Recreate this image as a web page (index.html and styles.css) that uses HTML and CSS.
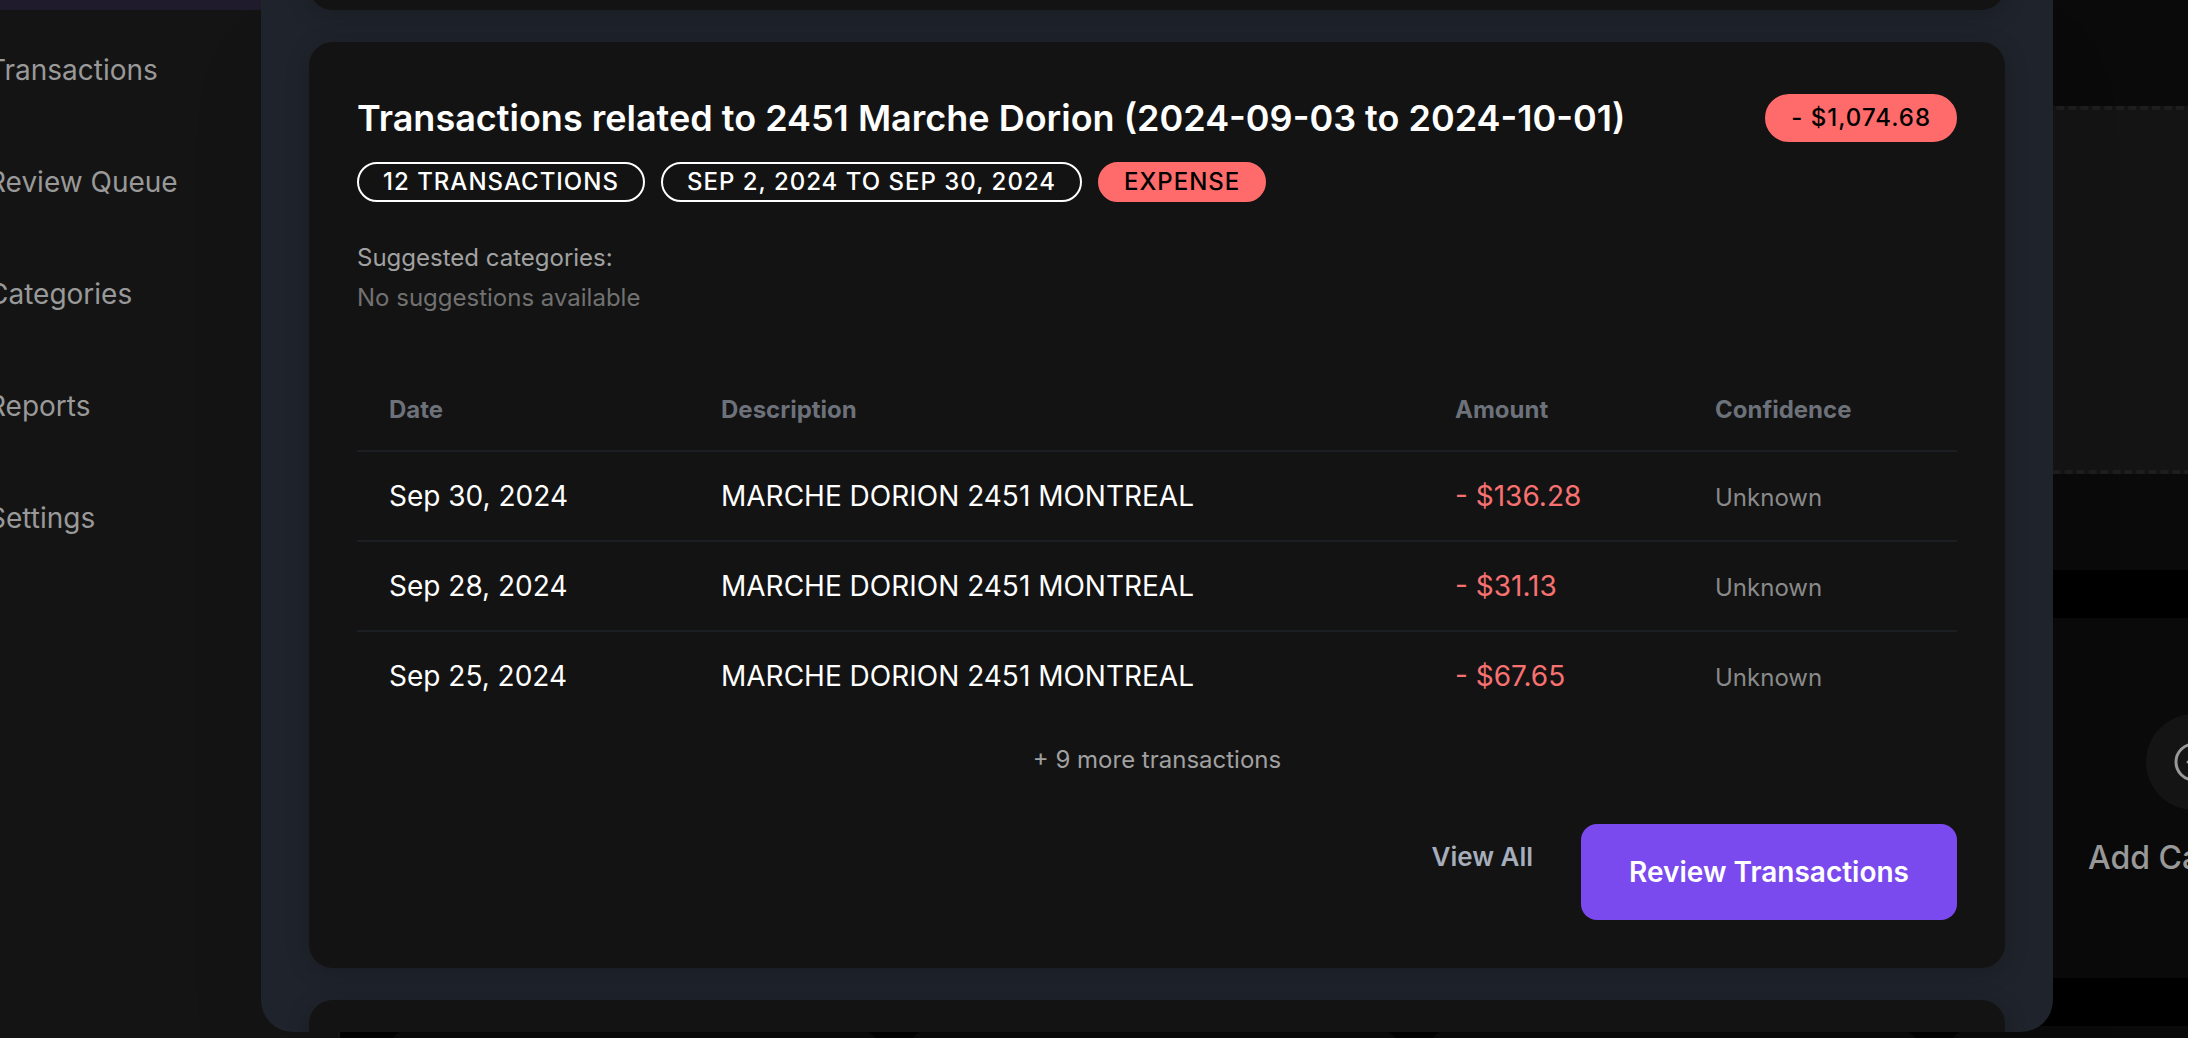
FILE: index.html
```html
<!DOCTYPE html>
<html lang="en">
<head>
<meta charset="utf-8">
<meta name="viewport" content="width=device-width, initial-scale=1">
<title>Review Queue</title>
<link rel="stylesheet" href="styles.css">
</head>
<body>
<div class="shell">
  <nav class="sidebar">
    <a class="nav-item active" href="#" aria-label="Dashboard"></a>
    <a class="nav-item" href="#">Transactions</a>
    <a class="nav-item" href="#">Review Queue</a>
    <a class="nav-item" href="#">Categories</a>
    <a class="nav-item" href="#">Reports</a>
    <a class="nav-item" href="#">Settings</a>
  </nav>
  <main class="main">
    <section class="upload">
      <div class="dropzone"></div>
    </section>
    <section class="actions">
      <a class="action" href="#">
        <span class="action-icon">
          <svg viewBox="0 0 24 24" width="48" height="48" fill="none" stroke="currentColor" stroke-width="1.5" stroke-linecap="round" stroke-linejoin="round" aria-hidden="true"><path d="M12 9v6m3-3H9m12 0a9 9 0 1 1-18 0 9 9 0 0 1 18 0Z"/></svg>
        </span>
        <span>Add Category</span>
      </a>
    </section>
    <section class="stats">
      <div class="stat"></div>
      <div class="stat"></div>
      <div class="stat"></div>
      <div class="stat"></div>
    </section>
  </main>
</div>

<div class="overlay">
  <div class="modal" role="dialog" aria-label="Transactions to review">
    <article class="card card-before"></article>
    <article class="card">
      <header class="card-head">
        <h2 class="title">Transactions related to 2451 Marche Dorion (2024-09-03 to 2024-10-01)</h2>
        <span class="badge badge-large badge-red">- $1,074.68</span>
      </header>
      <div class="badges">
        <span class="badge">12 TRANSACTIONS</span>
        <span class="badge">SEP 2, 2024 TO SEP 30, 2024</span>
        <span class="badge badge-red">EXPENSE</span>
      </div>
      <div class="suggest">
        <p class="suggest-label">Suggested categories:</p>
        <p class="suggest-none">No suggestions available</p>
      </div>
      <table class="table">
        <colgroup><col class="col-date"><col class="col-desc"><col class="col-amount"><col></colgroup>
        <thead>
          <tr><th scope="col">Date</th><th scope="col">Description</th><th scope="col">Amount</th><th scope="col">Confidence</th></tr>
        </thead>
        <tbody>
          <tr><td>Sep 30, 2024</td><td>MARCHE DORION 2451 MONTREAL</td><td class="amount">- $136.28</td><td><span class="unknown">Unknown</span></td></tr>
          <tr><td>Sep 28, 2024</td><td>MARCHE DORION 2451 MONTREAL</td><td class="amount">- $31.13</td><td><span class="unknown">Unknown</span></td></tr>
          <tr><td>Sep 25, 2024</td><td>MARCHE DORION 2451 MONTREAL</td><td class="amount">- $67.65</td><td><span class="unknown">Unknown</span></td></tr>
        </tbody>
      </table>
      <p class="more">+ 9 more transactions</p>
      <footer class="card-foot">
        <button class="btn-ghost" type="button">View All</button>
        <button class="btn-primary" type="button">Review Transactions</button>
      </footer>
    </article>
    <article class="card card-after"></article>
  </div>
</div>
</body>
</html>
```
FILE: styles.css
```css
* { box-sizing: border-box; margin: 0; padding: 0; }

html, body { height: 100%; }

body {
  position: relative;
  overflow: hidden;
  background: #000;
  color: #fff;
  font-family: Inter, "Liberation Sans", sans-serif;
  font-size: 28px;
  line-height: 40px;
}

a { color: inherit; text-decoration: none; }

/* Page behind the dialog */
.shell {
  display: flex;
  height: 100%;
  margin: 0 -300px 0 -100px;
}

.sidebar {
  display: flex;
  flex-direction: column;
  gap: 8px;
  flex: 0 0 440px;
  background: #141414;
  border-right: 2px solid #181818;
}

.nav-item {
  display: flex;
  align-items: center;
  flex: none;
  height: 104px;
  padding-left: 88px;
  color: #999;
}

.nav-item.active {
  height: 10px;
  background: #1f1a2c;
}

.main {
  display: flex;
  flex-direction: column;
  gap: 48px;
  flex: 1;
  padding: 0 46px;
}

.upload {
  flex: none;
  padding: 106px 48px 96px;
  background: #0a0a0a;
}

.dropzone {
  height: 368px;
  background: #141414;
  border: 4px dashed #1e1e1e;
  border-radius: 16px;
}

.actions, .stats {
  display: grid;
  grid-template-columns: repeat(4, 1fr);
  gap: 24px;
}

.actions { background: #0a0a0a; }

.action {
  grid-column: 4;
  display: flex;
  flex-direction: column;
  align-items: center;
  gap: 24px;
  padding: 96px 0;
  color: #999;
  font-size: 32px;
  font-weight: 500;
  line-height: 48px;
}

.action-icon {
  display: grid;
  place-items: center;
  width: 96px;
  height: 96px;
  border-radius: 50%;
  background: #141414;
}

.stat {
  height: 200px;
  border-radius: 32px;
  background: #0a0a0a;
}

/* Dialog */
.overlay {
  position: absolute;
  inset: 0;
  padding: 0 135px 6px 261px;
}

.modal {
  display: flex;
  flex-direction: column;
  gap: 32px;
  height: 100%;
  padding: 0 48px;
  overflow: hidden;
  background: #1f232b;
  border-radius: 0 0 32px 32px;
  box-shadow: 0 48px 96px -24px rgba(0, 0, 0, 0.15);
}

.card {
  flex: none;
  padding: 48px;
  background: #131313;
  border-radius: 24px;
  box-shadow: 0 4px 24px rgba(0, 0, 0, 0.2);
}

.card-before { height: 100px; margin-top: -90px; }
.card-after { height: 400px; }

.card-head {
  display: flex;
  align-items: center;
  justify-content: space-between;
  min-height: 56px;
}

.title {
  font-size: 36px;
  font-weight: 600;
  line-height: 56px;
}

.badges {
  display: flex;
  gap: 16px;
  margin-top: 16px;
}

.badge {
  display: flex;
  align-items: center;
  height: 40px;
  padding: 0 24px;
  border: 2px solid #fff;
  border-radius: 24px;
  font-size: 24px;
  font-weight: 500;
  line-height: 32px;
  letter-spacing: 1px;
}

.badge-large { height: 48px; }

.badge-red {
  background: #ff6b6b;
  border-color: #ff6b6b;
  color: #000;
}

.suggest {
  display: grid;
  gap: 8px;
  margin: 40px 0 56px;
  font-size: 24px;
  line-height: 32px;
}

.suggest-label { color: #a1a1a1; }
.suggest-none { color: #717171; }

.table {
  width: 100%;
  table-layout: fixed;
  border-collapse: separate;
  border-spacing: 0;
}

.col-date { width: 20.75%; }
.col-desc { width: 45.875%; }
.col-amount { width: 16.25%; }

.table th, .table td {
  padding: 24px 32px;
  text-align: left;
  border-bottom: 2px solid #1b1f24;
}

.table th {
  color: #6c717a;
  font-size: 24px;
  font-weight: 700;
  line-height: 32px;
}

.table tbody tr:last-child td { border-bottom: 0; }

.table .amount { color: #f87171; }

.unknown { color: #8a8a8a; font-size: 24px; line-height: 32px; }

.more {
  margin-top: 24px;
  color: #a1a1a1;
  font-size: 24px;
  line-height: 32px;
  text-align: center;
}

.card-foot {
  display: flex;
  align-items: flex-start;
  justify-content: flex-end;
  gap: 24px;
  margin-top: 48px;
}

.btn-ghost, .btn-primary {
  border: 0;
  font-family: inherit;
  font-weight: 600;
  cursor: pointer;
}

.btn-ghost {
  height: 64px;
  padding: 0 24px;
  background: transparent;
  color: #a6adbb;
  font-size: 26px;
}

.btn-primary {
  height: 96px;
  padding: 0 48px;
  border-radius: 16px;
  background: #7a4aef;
  color: #fff;
  font-size: 28px;
}
```
